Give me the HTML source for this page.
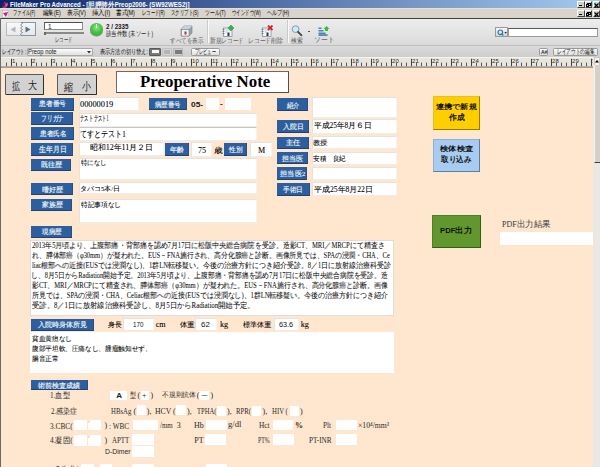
<!DOCTYPE html><html><head><meta charset="utf-8"><style>
*{box-sizing:border-box;margin:0;padding:0}
html,body{width:600px;height:467px;overflow:hidden;background:#FEE6CF}
body{position:relative;font-family:"Liberation Sans",sans-serif;color:#000}
.ab{position:absolute}
.t,.f{position:absolute;white-space:nowrap;line-height:1;transform-origin:0 0}
.lbl{position:absolute;background:#2D5D90;color:#EEF2F6;font-weight:bold;text-align:center;white-space:nowrap;border-bottom:1px solid #1E3F66;border-right:1px solid #244C78}
.fld{position:absolute;background:#fff;border-right:1px solid #E8DCD0;border-bottom:1px solid #E8DCD0}
.wb{position:absolute;background:#fff}
.serif{font-family:"Liberation Serif",serif}
</style></head><body>
<div class="ab" style="left:0;top:0;width:600px;height:8px;background:linear-gradient(to right,#0A246A,#A6CAF0)"></div>
<div class="ab" style="left:0;top:8px;width:600px;height:1px;background:#E4E0D8"></div>
<svg class="ab" style="left:1px;top:0.5px" width="8" height="8"><path d="M1 7 L3 1 L7 2 L5 7 Z" fill="#D0207A"/><path d="M1 7 L3 1 L4 4 Z" fill="#302838"/><path d="M4 4 L7 2 L6 6Z" fill="#F060A8"/></svg>
<div class="ab" style="left:577px;top:1px;width:7.5px;height:7px;background:#D4D0C8;border-top:1px solid #fff;border-left:1px solid #fff;border-right:1px solid #404040;border-bottom:1px solid #404040"></div>
<div class="ab" style="left:584.5px;top:1px;width:7.5px;height:7px;background:#D4D0C8;border-top:1px solid #fff;border-left:1px solid #fff;border-right:1px solid #404040;border-bottom:1px solid #404040"></div>
<div class="ab" style="left:592.5px;top:1px;width:7.5px;height:7px;background:#D4D0C8;border-top:1px solid #fff;border-left:1px solid #fff;border-right:1px solid #404040;border-bottom:1px solid #404040"></div>
<div class="ab" style="left:579px;top:5px;width:3px;height:1px;background:#000"></div>
<div class="ab" style="left:587px;top:2.5px;width:3.5px;height:3px;border:1px solid #000;border-top-width:1.5px"></div>
<div class="ab" style="left:586px;top:3.5px;width:3px;height:3px;border:1px solid #000;background:#D4D0C8"></div>
<svg class="ab" style="left:594px;top:2.5px" width="5" height="5"><path d="M0.5 0.5 L4.5 4.5 M4.5 0.5 L0.5 4.5" stroke="#000" stroke-width="1.2"/></svg>
<div class="ab" style="left:0;top:9px;width:600px;height:8.5px;background:#D8D4CA"></div>
<div class="ab" style="left:0;top:17.5px;width:600px;height:1px;background:#404040"></div>
<svg class="ab" style="left:2px;top:9.5px" width="7" height="8"><rect x="0.5" y="0.5" width="5.5" height="7" fill="#F4F0F4" stroke="#B8B0B8" stroke-width="0.5"/><path d="M1 3 L6 2 L4 7 Z" fill="#C8208A"/></svg>
<div class="ab" style="left:577px;top:10px;width:7.5px;height:6.5px;background:#D4D0C8;border-top:1px solid #fff;border-left:1px solid #fff;border-right:1px solid #404040;border-bottom:1px solid #404040"></div>
<div class="ab" style="left:584.5px;top:10px;width:7.5px;height:6.5px;background:#D4D0C8;border-top:1px solid #fff;border-left:1px solid #fff;border-right:1px solid #404040;border-bottom:1px solid #404040"></div>
<div class="ab" style="left:592.5px;top:10px;width:7.5px;height:6.5px;background:#D4D0C8;border-top:1px solid #fff;border-left:1px solid #fff;border-right:1px solid #404040;border-bottom:1px solid #404040"></div>
<div class="ab" style="left:579px;top:13.5px;width:3px;height:1px;background:#000"></div>
<div class="ab" style="left:587px;top:11.5px;width:3.5px;height:3px;border:1px solid #000;border-top-width:1.5px"></div>
<div class="ab" style="left:586px;top:12.5px;width:3px;height:3px;border:1px solid #000;background:#D4D0C8"></div>
<svg class="ab" style="left:594px;top:11.5px" width="5" height="5"><path d="M0.5 0.5 L4.5 4.5 M4.5 0.5 L0.5 4.5" stroke="#000" stroke-width="1.2"/></svg>
<div class="ab" style="left:0;top:18.5px;width:600px;height:26.5px;background:linear-gradient(#EDEDED,#E4E4E4 50%,#DADADA)"></div>
<div class="ab" style="left:5.5px;top:22px;width:15.5px;height:13.5px;background:linear-gradient(#FAFAFA,#EAEAEA);border:1px solid #B8B8B8;border-right:none;border-top-color:#D8D8D8"></div>
<div class="ab" style="left:21px;top:22px;width:15px;height:13.5px;background:linear-gradient(#F4F6F8,#E4E8EC);border:1px solid #8896A4;border-right-width:1.5px;border-bottom-width:1.5px;border-left:none"></div>
<svg class="ab" style="left:19.5px;top:22px" width="3" height="14"><path d="M1.5 0 L2.5 1.5 L0.5 3 L2.5 4.5 L0.5 6 L2.5 7.5 L0.5 9 L2.5 10.5 L0.5 12 L1.5 13.5" stroke="#505860" stroke-width="0.6" fill="none"/></svg>
<svg class="ab" style="left:10px;top:25.5px" width="6" height="7"><path d="M5.5 0.5 L0.5 3.5 L5.5 6.5Z" fill="#B4B8BC"/></svg>
<svg class="ab" style="left:25px;top:25.5px" width="6" height="7"><path d="M0.5 0.5 L5.5 3.5 L0.5 6.5Z" fill="#5E6E80"/></svg>
<div class="ab" style="left:44.4px;top:22.1px;width:38.2px;height:7.6px;background:#fff;border:1px solid #8A8A8A;border-top:1.5px solid #505050;border-left:1.5px solid #606060"></div>
<div class="ab" style="left:44.5px;top:32.3px;width:39.8px;height:1.5px;background:#8A8A8A"></div>
<div class="ab" style="left:44px;top:31.5px;width:2px;height:3px;background:#6A6A6A"></div>
<div class="ab" style="left:90.2px;top:23.25px;width:12.8px;height:12.25px;border-radius:50%;background:radial-gradient(circle at 50% 35%,#90EA88 0,#4CC04A 45%,#2E9A30 100%);box-shadow:0 0.5px 0.5px #6A8A6A"></div>
<div class="ab" style="left:96.3px;top:24px;width:0.8px;height:4px;background:#E8FFE8"></div>
<div class="ab" style="left:207px;top:20px;width:1px;height:23px;background:#CACACA"></div>
<div class="ab" style="left:208px;top:20px;width:1px;height:23px;background:#FAFAFA"></div>
<div class="ab" style="left:287px;top:20px;width:1px;height:23px;background:#CACACA"></div>
<div class="ab" style="left:288px;top:20px;width:1px;height:23px;background:#FAFAFA"></div>
<svg class="ab" style="left:180px;top:25px" width="13" height="12"><path d="M1 4 L4 1 L12 1 L12 8 L9 11 L1 11Z" fill="#9AA4AE" stroke="#6E7882" stroke-width="0.6"/><rect x="1.5" y="4.5" width="7.5" height="6.5" fill="#F0F2F4" stroke="#7A848E" stroke-width="0.6"/><path d="M4 1 L12 1 L9 4 L1 4Z" fill="#C8D0D8"/><rect x="4.5" y="6.5" width="2" height="3" fill="#A03838"/></svg>
<svg class="ab" style="left:221.5px;top:24.5px" width="13" height="12"><rect x="1.5" y="3" width="8.5" height="8.5" fill="#F4F6F8" stroke="#7A8490" stroke-width="0.7"/><path d="M0.5 4.5h2M0.5 6.5h2M0.5 8.5h2" stroke="#505A64" stroke-width="0.6"/><path d="M3.5 5h5M3.5 7h2" stroke="#9CC4E4" stroke-width="0.8"/><rect x="5.5" y="7.5" width="2" height="3.5" fill="#303848"/><path d="M9 0 L12 3 L9 6 L6 3Z" fill="#40B040" stroke="#208020" stroke-width="0.4"/></svg>
<svg class="ab" style="left:260.5px;top:24.5px" width="13" height="12"><rect x="1.5" y="3" width="8.5" height="8.5" fill="#F4F6F8" stroke="#7A8490" stroke-width="0.7"/><path d="M0.5 4.5h2M0.5 6.5h2M0.5 8.5h2" stroke="#505A64" stroke-width="0.6"/><path d="M3.5 5h5M3.5 7h2" stroke="#9CC4E4" stroke-width="0.8"/><rect x="5.5" y="7.5" width="2" height="3.5" fill="#303848"/><path d="M7 0.5 L11.5 5 M11.5 0.5 L7 5" stroke="#D02828" stroke-width="1.8"/></svg>
<svg class="ab" style="left:291px;top:25px" width="12" height="12"><circle cx="4.6" cy="4.2" r="3.4" fill="#C8ECF8" stroke="#8A9AA4" stroke-width="1"/><path d="M7 6.8 L10.5 10.3" stroke="#404448" stroke-width="1.8" stroke-linecap="round"/></svg>
<div class="ab" style="left:308px;top:30.5px;width:2px;height:1px;background:#505050"></div>
<svg class="ab" style="left:317.5px;top:25.5px" width="13" height="10"><rect x="0.5" y="1.5" width="3" height="1.5" fill="#5080B8"/><rect x="0.5" y="4" width="5" height="1.5" fill="#5080B8"/><rect x="0.5" y="6.5" width="7" height="1.5" fill="#5080B8"/><rect x="0.5" y="8.3" width="9" height="1.5" fill="#4070A8"/><path d="M8.5 0 L11.5 3 L10 3 L10 5 L7 5 L7 3 L5.5 3Z" fill="#30C030"/></svg>
<div class="ab" style="left:495px;top:27px;width:13px;height:10px;background:linear-gradient(#F8F8F8,#D4D4D4);border:1px solid #9A9A9A"></div>
<svg class="ab" style="left:496.5px;top:28.5px" width="11" height="8"><circle cx="3.3" cy="3.3" r="2.3" fill="none" stroke="#2878B0" stroke-width="1.2"/><path d="M4.8 4.8 L6.3 6.5" stroke="#2878B0" stroke-width="1.2"/><path d="M7.3 3 L10 3 L8.65 4.8Z" fill="#303030"/></svg>
<div class="ab" style="left:507.5px;top:27.5px;width:90.5px;height:9.5px;background:#fff;border:1px solid #9A9A9A;border-top:1.5px solid #5A5A5A"></div>
<div class="ab" style="left:0;top:45px;width:600px;height:12.5px;background:linear-gradient(#DADADA,#CDCDCD);border-top:1px solid #BEBEBE"></div>
<div class="ab" style="left:27px;top:47.5px;width:65.5px;height:8px;background:linear-gradient(#FCFCFC,#E0E0E0);border:1px solid #A8A8A8;border-radius:1px"></div>
<svg class="ab" style="left:86.5px;top:50.5px" width="4" height="3"><path d="M0 0 L4 0 L2 2.5Z" fill="#303030"/></svg>
<div class="ab" style="left:149.2px;top:47.5px;width:11.8px;height:8.1px;background:#767676;border:1px solid #5A5A5A;border-radius:1px"></div>
<div class="ab" style="left:151.5px;top:49.5px;width:7.5px;height:4px;background:#FAFAFA;border-bottom:0.8px solid #808080"></div>
<div class="ab" style="left:161.5px;top:47.5px;width:10.4px;height:8.1px;background:#D4D4D4;border:1px solid #C0C0C0"></div>
<div class="ab" style="left:163.5px;top:49.5px;width:6.5px;height:4px;background:#B4B4B4"></div>
<div class="ab" style="left:172.6px;top:47.5px;width:10.6px;height:8.1px;background:#D0D0D0;border:1px solid #B8B8B8"></div>
<div class="ab" style="left:174.5px;top:49.5px;width:7px;height:4px;background:#7A7A7A"></div>
<div class="ab" style="left:190.7px;top:47.5px;width:29.3px;height:8.5px;background:linear-gradient(#FCFCFC,#DEDEDE);border:1px solid #9A9A9A;border-radius:1.5px"></div>
<div class="ab" style="left:538.7px;top:47.5px;width:9.3px;height:8.5px;background:linear-gradient(#FCFCFC,#DEDEDE);border:1px solid #9A9A9A;border-radius:1.5px"></div>
<div class="ab" style="left:553px;top:47.5px;width:44.5px;height:8.5px;background:linear-gradient(#FCFCFC,#DEDEDE);border:1px solid #9A9A9A;border-radius:1.5px"></div>
<svg class="ab" style="left:0;top:57.3px" width="594" height="11"><rect x="0" y="0" width="594" height="9.5" fill="#E8E5DC"/><rect x="0" y="0" width="594" height="1" fill="#F6F4EE"/><rect x="0" y="9.4" width="594" height="1.4" fill="#8A8A8A"/><rect x="6.0" y="5.6" width="1" height="3.6" fill="#585858"/><rect x="11.0" y="1.8" width="1" height="7.4" fill="#404040"/><text x="12.1" y="6.2" font-size="6" font-family="Liberation Sans" fill="#303030">1</text><rect x="16.0" y="5.6" width="1" height="3.6" fill="#585858"/><rect x="21.0" y="5.6" width="1" height="3.6" fill="#585858"/><rect x="26.0" y="5.6" width="1" height="3.6" fill="#585858"/><rect x="31.0" y="1.8" width="1" height="7.4" fill="#404040"/><text x="32.1" y="6.2" font-size="6" font-family="Liberation Sans" fill="#303030">2</text><rect x="36.0" y="5.6" width="1" height="3.6" fill="#585858"/><rect x="41.0" y="5.6" width="1" height="3.6" fill="#585858"/><rect x="46.0" y="5.6" width="1" height="3.6" fill="#585858"/><rect x="51.0" y="1.8" width="1" height="7.4" fill="#404040"/><text x="52.1" y="6.2" font-size="6" font-family="Liberation Sans" fill="#303030">3</text><rect x="56.0" y="5.6" width="1" height="3.6" fill="#585858"/><rect x="61.0" y="5.6" width="1" height="3.6" fill="#585858"/><rect x="66.0" y="5.6" width="1" height="3.6" fill="#585858"/><rect x="71.0" y="1.8" width="1" height="7.4" fill="#404040"/><text x="72.1" y="6.2" font-size="6" font-family="Liberation Sans" fill="#303030">4</text><rect x="76.0" y="5.6" width="1" height="3.6" fill="#585858"/><rect x="81.0" y="5.6" width="1" height="3.6" fill="#585858"/><rect x="86.0" y="5.6" width="1" height="3.6" fill="#585858"/><rect x="91.0" y="1.8" width="1" height="7.4" fill="#404040"/><text x="92.1" y="6.2" font-size="6" font-family="Liberation Sans" fill="#303030">5</text><rect x="96.0" y="5.6" width="1" height="3.6" fill="#585858"/><rect x="101.0" y="5.6" width="1" height="3.6" fill="#585858"/><rect x="106.0" y="5.6" width="1" height="3.6" fill="#585858"/><rect x="111.0" y="1.8" width="1" height="7.4" fill="#404040"/><text x="112.1" y="6.2" font-size="6" font-family="Liberation Sans" fill="#303030">6</text><rect x="116.0" y="5.6" width="1" height="3.6" fill="#585858"/><rect x="121.0" y="5.6" width="1" height="3.6" fill="#585858"/><rect x="126.0" y="5.6" width="1" height="3.6" fill="#585858"/><rect x="131.0" y="1.8" width="1" height="7.4" fill="#404040"/><text x="132.1" y="6.2" font-size="6" font-family="Liberation Sans" fill="#303030">7</text><rect x="136.0" y="5.6" width="1" height="3.6" fill="#585858"/><rect x="141.0" y="5.6" width="1" height="3.6" fill="#585858"/><rect x="146.0" y="5.6" width="1" height="3.6" fill="#585858"/><rect x="151.0" y="1.8" width="1" height="7.4" fill="#404040"/><text x="152.1" y="6.2" font-size="6" font-family="Liberation Sans" fill="#303030">8</text><rect x="156.0" y="5.6" width="1" height="3.6" fill="#585858"/><rect x="161.0" y="5.6" width="1" height="3.6" fill="#585858"/><rect x="166.0" y="5.6" width="1" height="3.6" fill="#585858"/><rect x="171.0" y="1.8" width="1" height="7.4" fill="#404040"/><text x="172.1" y="6.2" font-size="6" font-family="Liberation Sans" fill="#303030">9</text><rect x="176.0" y="5.6" width="1" height="3.6" fill="#585858"/><rect x="181.0" y="5.6" width="1" height="3.6" fill="#585858"/><rect x="186.0" y="5.6" width="1" height="3.6" fill="#585858"/><rect x="191.0" y="1.8" width="1" height="7.4" fill="#404040"/><text x="192.1" y="6.2" font-size="6" font-family="Liberation Sans" fill="#303030">10</text><rect x="196.0" y="5.6" width="1" height="3.6" fill="#585858"/><rect x="201.0" y="5.6" width="1" height="3.6" fill="#585858"/><rect x="206.0" y="5.6" width="1" height="3.6" fill="#585858"/><rect x="211.0" y="1.8" width="1" height="7.4" fill="#404040"/><text x="212.1" y="6.2" font-size="6" font-family="Liberation Sans" fill="#303030">11</text><rect x="216.0" y="5.6" width="1" height="3.6" fill="#585858"/><rect x="221.0" y="5.6" width="1" height="3.6" fill="#585858"/><rect x="226.0" y="5.6" width="1" height="3.6" fill="#585858"/><rect x="231.0" y="1.8" width="1" height="7.4" fill="#404040"/><text x="232.1" y="6.2" font-size="6" font-family="Liberation Sans" fill="#303030">12</text><rect x="236.0" y="5.6" width="1" height="3.6" fill="#585858"/><rect x="241.0" y="5.6" width="1" height="3.6" fill="#585858"/><rect x="246.0" y="5.6" width="1" height="3.6" fill="#585858"/><rect x="251.0" y="1.8" width="1" height="7.4" fill="#404040"/><text x="252.1" y="6.2" font-size="6" font-family="Liberation Sans" fill="#303030">13</text><rect x="256.0" y="5.6" width="1" height="3.6" fill="#585858"/><rect x="261.0" y="5.6" width="1" height="3.6" fill="#585858"/><rect x="266.0" y="5.6" width="1" height="3.6" fill="#585858"/><rect x="271.0" y="1.8" width="1" height="7.4" fill="#404040"/><text x="272.1" y="6.2" font-size="6" font-family="Liberation Sans" fill="#303030">14</text><rect x="276.0" y="5.6" width="1" height="3.6" fill="#585858"/><rect x="281.0" y="5.6" width="1" height="3.6" fill="#585858"/><rect x="286.0" y="5.6" width="1" height="3.6" fill="#585858"/><rect x="291.0" y="1.8" width="1" height="7.4" fill="#404040"/><text x="292.1" y="6.2" font-size="6" font-family="Liberation Sans" fill="#303030">15</text><rect x="296.0" y="5.6" width="1" height="3.6" fill="#585858"/><rect x="301.0" y="5.6" width="1" height="3.6" fill="#585858"/><rect x="306.0" y="5.6" width="1" height="3.6" fill="#585858"/><rect x="311.0" y="1.8" width="1" height="7.4" fill="#404040"/><text x="312.1" y="6.2" font-size="6" font-family="Liberation Sans" fill="#303030">16</text><rect x="316.0" y="5.6" width="1" height="3.6" fill="#585858"/><rect x="321.0" y="5.6" width="1" height="3.6" fill="#585858"/><rect x="326.0" y="5.6" width="1" height="3.6" fill="#585858"/><rect x="331.0" y="1.8" width="1" height="7.4" fill="#404040"/><text x="332.1" y="6.2" font-size="6" font-family="Liberation Sans" fill="#303030">17</text><rect x="336.0" y="5.6" width="1" height="3.6" fill="#585858"/><rect x="341.0" y="5.6" width="1" height="3.6" fill="#585858"/><rect x="346.0" y="5.6" width="1" height="3.6" fill="#585858"/><rect x="351.0" y="1.8" width="1" height="7.4" fill="#404040"/><text x="352.1" y="6.2" font-size="6" font-family="Liberation Sans" fill="#303030">18</text><rect x="356.0" y="5.6" width="1" height="3.6" fill="#585858"/><rect x="361.0" y="5.6" width="1" height="3.6" fill="#585858"/><rect x="366.0" y="5.6" width="1" height="3.6" fill="#585858"/><rect x="371.0" y="1.8" width="1" height="7.4" fill="#404040"/><text x="372.1" y="6.2" font-size="6" font-family="Liberation Sans" fill="#303030">19</text><rect x="376.0" y="5.6" width="1" height="3.6" fill="#585858"/><rect x="381.0" y="5.6" width="1" height="3.6" fill="#585858"/><rect x="386.0" y="5.6" width="1" height="3.6" fill="#585858"/><rect x="391.0" y="1.8" width="1" height="7.4" fill="#404040"/><text x="392.1" y="6.2" font-size="6" font-family="Liberation Sans" fill="#303030">20</text><rect x="396.0" y="5.6" width="1" height="3.6" fill="#585858"/><rect x="401.0" y="5.6" width="1" height="3.6" fill="#585858"/><rect x="406.0" y="5.6" width="1" height="3.6" fill="#585858"/><rect x="411.0" y="1.8" width="1" height="7.4" fill="#404040"/><text x="412.1" y="6.2" font-size="6" font-family="Liberation Sans" fill="#303030">21</text><rect x="416.0" y="5.6" width="1" height="3.6" fill="#585858"/><rect x="421.0" y="5.6" width="1" height="3.6" fill="#585858"/><rect x="426.0" y="5.6" width="1" height="3.6" fill="#585858"/><rect x="431.0" y="1.8" width="1" height="7.4" fill="#404040"/><text x="432.1" y="6.2" font-size="6" font-family="Liberation Sans" fill="#303030">22</text><rect x="436.0" y="5.6" width="1" height="3.6" fill="#585858"/><rect x="441.0" y="5.6" width="1" height="3.6" fill="#585858"/><rect x="446.0" y="5.6" width="1" height="3.6" fill="#585858"/><rect x="451.0" y="1.8" width="1" height="7.4" fill="#404040"/><text x="452.1" y="6.2" font-size="6" font-family="Liberation Sans" fill="#303030">23</text><rect x="456.0" y="5.6" width="1" height="3.6" fill="#585858"/><rect x="461.0" y="5.6" width="1" height="3.6" fill="#585858"/><rect x="466.0" y="5.6" width="1" height="3.6" fill="#585858"/><rect x="471.0" y="1.8" width="1" height="7.4" fill="#404040"/><text x="472.1" y="6.2" font-size="6" font-family="Liberation Sans" fill="#303030">24</text><rect x="476.0" y="5.6" width="1" height="3.6" fill="#585858"/><rect x="481.0" y="5.6" width="1" height="3.6" fill="#585858"/><rect x="486.0" y="5.6" width="1" height="3.6" fill="#585858"/><rect x="491.0" y="1.8" width="1" height="7.4" fill="#404040"/><text x="492.1" y="6.2" font-size="6" font-family="Liberation Sans" fill="#303030">25</text><rect x="496.0" y="5.6" width="1" height="3.6" fill="#585858"/><rect x="501.0" y="5.6" width="1" height="3.6" fill="#585858"/><rect x="506.0" y="5.6" width="1" height="3.6" fill="#585858"/><rect x="511.0" y="1.8" width="1" height="7.4" fill="#404040"/><text x="512.1" y="6.2" font-size="6" font-family="Liberation Sans" fill="#303030">26</text><rect x="516.0" y="5.6" width="1" height="3.6" fill="#585858"/><rect x="521.0" y="5.6" width="1" height="3.6" fill="#585858"/><rect x="526.0" y="5.6" width="1" height="3.6" fill="#585858"/><rect x="531.0" y="1.8" width="1" height="7.4" fill="#404040"/><text x="532.1" y="6.2" font-size="6" font-family="Liberation Sans" fill="#303030">27</text><rect x="536.0" y="5.6" width="1" height="3.6" fill="#585858"/><rect x="541.0" y="5.6" width="1" height="3.6" fill="#585858"/><rect x="546.0" y="5.6" width="1" height="3.6" fill="#585858"/><rect x="551.0" y="1.8" width="1" height="7.4" fill="#404040"/><text x="552.1" y="6.2" font-size="6" font-family="Liberation Sans" fill="#303030">28</text><rect x="556.0" y="5.6" width="1" height="3.6" fill="#585858"/><rect x="561.0" y="5.6" width="1" height="3.6" fill="#585858"/><rect x="566.0" y="5.6" width="1" height="3.6" fill="#585858"/><rect x="571.0" y="1.8" width="1" height="7.4" fill="#404040"/><text x="572.1" y="6.2" font-size="6" font-family="Liberation Sans" fill="#303030">29</text><rect x="576.0" y="5.6" width="1" height="3.6" fill="#585858"/><rect x="581.0" y="5.6" width="1" height="3.6" fill="#585858"/><rect x="586.0" y="5.6" width="1" height="3.6" fill="#585858"/><rect x="591.0" y="1.8" width="1" height="7.4" fill="#404040"/><text x="592.1" y="6.2" font-size="6" font-family="Liberation Sans" fill="#303030">30</text></svg>
<div class="ab" style="left:0;top:18px;width:1px;height:449px;background:#6A6A6A"></div>
<div class="ab" style="left:593.2px;top:57.3px;width:6.8px;height:410px;background:#E9E8E4"></div>
<div class="ab" style="left:593.5px;top:57.3px;width:6.5px;height:8.5px;background:#F2F2F0;border:0.5px solid #C8C8C8"></div>
<svg class="ab" style="left:595px;top:59.5px" width="4" height="3"><path d="M0 2.5 L4 2.5 L2 0Z" fill="#000"/></svg>
<div class="ab" style="left:593.5px;top:64.5px;width:6.5px;height:98px;background:#D4D0C8;border-left:1px solid #F4F4F2;border-bottom:1px solid #404040"></div>
<div class="ab" style="left:5px;top:73.6px;width:39px;height:21.4px;background:#D2D2D2;border:1px solid #5A5A5A;border-right:1.5px solid #303030;border-bottom:1.5px solid #303030;border-radius:1.5px"></div>
<div class="ab" style="left:57.4px;top:73.6px;width:40.0px;height:21.4px;background:#D2D2D2;border:1px solid #5A5A5A;border-right:1.5px solid #303030;border-bottom:1.5px solid #303030;border-radius:1.5px"></div>
<div class="ab" style="left:116px;top:71px;width:173.3px;height:22.3px;background:#fff;border:1px solid #6A6A6A;border-right:1.5px solid #505050;border-bottom:1.5px solid #505050"></div>
<div class="ab" style="left:31.3px;top:97.5px;width:42.9px;height:13.0px;background:#2D5F9F;border-bottom:1px solid #1E4274;border-right:1px solid #24508A"></div>
<div class="ab" style="left:31.3px;top:112.2px;width:41.5px;height:12.4px;background:#2D5F9F;border-bottom:1px solid #1E4274;border-right:1px solid #24508A"></div>
<div class="ab" style="left:31.3px;top:127.1px;width:42.8px;height:12.9px;background:#2D5F9F;border-bottom:1px solid #1E4274;border-right:1px solid #24508A"></div>
<div class="ab" style="left:31.3px;top:142.7px;width:41.7px;height:13.2px;background:#2D5F9F;border-bottom:1px solid #1E4274;border-right:1px solid #24508A"></div>
<div class="ab" style="left:31.3px;top:159px;width:40.0px;height:12.1px;background:#2D5F9F;border-bottom:1px solid #1E4274;border-right:1px solid #24508A"></div>
<div class="ab" style="left:31.2px;top:183.2px;width:41.8px;height:11.6px;background:#2D5F9F;border-bottom:1px solid #1E4274;border-right:1px solid #24508A"></div>
<div class="ab" style="left:31.2px;top:199.3px;width:40.5px;height:11.5px;background:#2D5F9F;border-bottom:1px solid #1E4274;border-right:1px solid #24508A"></div>
<div class="ab" style="left:31.2px;top:226.3px;width:40.5px;height:11.5px;background:#2D5F9F;border-bottom:1px solid #1E4274;border-right:1px solid #24508A"></div>
<div class="ab" style="left:30.6px;top:319.3px;width:63.3px;height:11.3px;background:#2D5F9F;border-bottom:1px solid #1E4274;border-right:1px solid #24508A"></div>
<div class="ab" style="left:31px;top:379.6px;width:56.75px;height:10.9px;background:#2D5F9F;border-bottom:1px solid #1E4274;border-right:1px solid #24508A"></div>
<div class="ab" style="left:78.8px;top:97px;width:60.4px;height:14px;background:#fff;border:1px solid #E6E2DE;border-right-color:#F6F2EE;border-bottom-color:#F2ECE6;"></div>
<div class="ab" style="left:78.8px;top:113px;width:178.0px;height:13.5px;background:#fff;border:1px solid #E6E2DE;border-right-color:#F6F2EE;border-bottom-color:#F2ECE6;"></div>
<div class="ab" style="left:78.8px;top:126.5px;width:178.0px;height:14.25px;background:#fff;border:1px solid #E6E2DE;border-right-color:#F6F2EE;border-bottom-color:#F2ECE6;border-top-color:#C8C8C8"></div>
<div class="ab" style="left:78.8px;top:142.25px;width:84.95px;height:13.5px;background:#fff;border:1px solid #E6E2DE;border-right-color:#F6F2EE;border-bottom-color:#F2ECE6;"></div>
<div class="ab" style="left:165.4px;top:142.75px;width:23.2px;height:12.75px;background:#2D5F9F;border-bottom:1px solid #1E4274;border-right:1px solid #24508A"></div>
<div class="ab" style="left:190.5px;top:141.8px;width:21.85px;height:15.2px;background:#fff;border:1px solid #E6E2DE;border-right-color:#F6F2EE;border-bottom-color:#F2ECE6;"></div>
<div class="ab" style="left:224.3px;top:142.75px;width:22.8px;height:12.75px;background:#2D5F9F;border-bottom:1px solid #1E4274;border-right:1px solid #24508A"></div>
<div class="ab" style="left:249.8px;top:141.8px;width:22.0px;height:15.2px;background:#fff;border:1px solid #E6E2DE;border-right-color:#F6F2EE;border-bottom-color:#F2ECE6;"></div>
<div class="ab" style="left:78.8px;top:158px;width:178.3px;height:22.4px;background:#fff;border:1px solid #E6E2DE;border-right-color:#F6F2EE;border-bottom-color:#F2ECE6;"></div>
<div class="ab" style="left:78.8px;top:182.3px;width:178.3px;height:12.2px;background:#fff;border:1px solid #E6E2DE;border-right-color:#F6F2EE;border-bottom-color:#F2ECE6;"></div>
<div class="ab" style="left:78.8px;top:198.5px;width:178.3px;height:24.0px;background:#fff;border:1px solid #E6E2DE;border-right-color:#F6F2EE;border-bottom-color:#F2ECE6;"></div>
<div class="ab" style="left:148.9px;top:98.2px;width:37.7px;height:12.3px;background:#2D5F9F;border-bottom:1px solid #1E4274;border-right:1px solid #24508A"></div>
<div class="ab" style="left:205.6px;top:97.6px;width:13.4px;height:12.4px;background:#fff"></div>
<div class="ab" style="left:225px;top:97.6px;width:25.6px;height:12.4px;background:#fff"></div>
<div class="ab" style="left:277.4px;top:97.7px;width:30.5px;height:13.4px;background:#2D5F9F;border-bottom:1px solid #1E4274;border-right:1px solid #24508A"></div>
<div class="ab" style="left:312.1px;top:97.1px;width:85.1px;height:20.7px;background:#fff;border:1px solid #E6E2DE;border-right-color:#F6F2EE;border-bottom-color:#F2ECE6;"></div>
<div class="ab" style="left:277.4px;top:120.2px;width:31.6px;height:12.8px;background:#2D5F9F;border-bottom:1px solid #1E4274;border-right:1px solid #24508A"></div>
<div class="ab" style="left:312.1px;top:119.2px;width:85.1px;height:14.9px;background:#fff;border:1px solid #E6E2DE;border-right-color:#F6F2EE;border-bottom-color:#F2ECE6;"></div>
<div class="ab" style="left:277.3px;top:136.8px;width:31.3px;height:12.2px;background:#2D5F9F;border-bottom:1px solid #1E4274;border-right:1px solid #24508A"></div>
<div class="ab" style="left:312.1px;top:136.2px;width:85.1px;height:13.1px;background:#fff;border:1px solid #E6E2DE;border-right-color:#F6F2EE;border-bottom-color:#F2ECE6;"></div>
<div class="ab" style="left:277.3px;top:152.1px;width:30.7px;height:12.4px;background:#2D5F9F;border-bottom:1px solid #1E4274;border-right:1px solid #24508A"></div>
<div class="ab" style="left:312.1px;top:152px;width:85.1px;height:12.9px;background:#fff;border:1px solid #E6E2DE;border-right-color:#F6F2EE;border-bottom-color:#F2ECE6;"></div>
<div class="ab" style="left:277.3px;top:167.4px;width:30.1px;height:12.4px;background:#2D5F9F;border-bottom:1px solid #1E4274;border-right:1px solid #24508A"></div>
<div class="ab" style="left:312.1px;top:166.7px;width:85.1px;height:13.6px;background:#fff;border:1px solid #E6E2DE;border-right-color:#F6F2EE;border-bottom-color:#F2ECE6;"></div>
<div class="ab" style="left:277.3px;top:182.7px;width:32.4px;height:13.0px;background:#2D5F9F;border-bottom:1px solid #1E4274;border-right:1px solid #24508A"></div>
<div class="ab" style="left:312.1px;top:181.9px;width:85.1px;height:14.1px;background:#fff;border:1px solid #E6E2DE;border-right-color:#F6F2EE;border-bottom-color:#F2ECE6;"></div>
<div class="ab" style="left:433.2px;top:96.2px;width:46.6px;height:33.8px;background:#FFCE00;border:1px solid #E8C020;border-right:1.5px solid #9A7C00;border-bottom:1.5px solid #9A7C00"></div>
<div class="ab" style="left:433.3px;top:138.5px;width:46.7px;height:33.8px;background:#A8CBF2;border:1px solid #90B0D8;border-right:1.5px solid #5A7EA6;border-bottom:1.5px solid #5A7EA6"></div>
<div class="ab" style="left:432.2px;top:214.6px;width:48.7px;height:33.7px;background:#62972F;border:1px solid #4C8226;border-right:1.5px solid #2C6410;border-bottom:1.5px solid #2C6410"></div>
<div class="ab" style="left:500.4px;top:231.9px;width:92.8px;height:13.0px;background:#fff"></div>
<div class="ab" style="left:30.3px;top:240px;width:364.1px;height:75.8px;background:#fff;border:1px solid #E0DCD8"></div>
<div class="ab" style="left:123.3px;top:318.2px;width:30.4px;height:13.3px;background:#fff;border:1px solid #E6E2DE;border-right-color:#F6F2EE;border-bottom-color:#F2ECE6;"></div>
<div class="ab" style="left:195.3px;top:318.2px;width:21.4px;height:13.3px;background:#fff;border:1px solid #E6E2DE;border-right-color:#F6F2EE;border-bottom-color:#F2ECE6;"></div>
<div class="ab" style="left:274px;top:318.2px;width:25.3px;height:12.8px;background:#fff;border:1px solid #E6E2DE;border-right-color:#F6F2EE;border-bottom-color:#F2ECE6;"></div>
<div class="ab" style="left:30.3px;top:331.7px;width:364.0px;height:41.3px;background:#fff"></div>
<div class="ab" style="left:110.1px;top:390.6px;width:16.5px;height:9.7px;background:#fff"></div>
<div class="ab" style="left:140.75px;top:390.6px;width:8.25px;height:9.7px;background:#fff"></div>
<div class="ab" style="left:199.4px;top:390.6px;width:10.1px;height:9.7px;background:#fff"></div>
<div class="ab" style="left:137.1px;top:405.25px;width:8.6px;height:10.05px;background:#fff"></div>
<div class="ab" style="left:175.6px;top:405.25px;width:10.1px;height:10.05px;background:#fff"></div>
<div class="ab" style="left:217px;top:405.5px;width:9.2px;height:10.6px;background:#fff"></div>
<div class="ab" style="left:251.8px;top:405.5px;width:9.2px;height:10.6px;background:#fff"></div>
<div class="ab" style="left:290.3px;top:405.5px;width:8.8px;height:10.6px;background:#fff"></div>
<div class="ab" style="left:73.5px;top:419.8px;width:13.5px;height:10.5px;background:#fff"></div>
<div class="ab" style="left:88.2px;top:419.8px;width:13.3px;height:10.5px;background:#fff"></div>
<div class="ab" style="left:132.5px;top:419.8px;width:25.7px;height:10.5px;background:#fff"></div>
<div class="ab" style="left:205.5px;top:419.8px;width:21.0px;height:10.1px;background:#fff"></div>
<div class="ab" style="left:273.2px;top:419.8px;width:20.3px;height:10.1px;background:#fff"></div>
<div class="ab" style="left:335.6px;top:420px;width:21.4px;height:10px;background:#fff"></div>
<div class="ab" style="left:73.5px;top:435px;width:13.5px;height:10.5px;background:#fff"></div>
<div class="ab" style="left:88.2px;top:435px;width:13.3px;height:10.5px;background:#fff"></div>
<div class="ab" style="left:131.8px;top:433.8px;width:22.4px;height:11.7px;background:#fff"></div>
<div class="ab" style="left:204.8px;top:433.8px;width:21.7px;height:11.0px;background:#fff"></div>
<div class="ab" style="left:272.5px;top:433.8px;width:21.7px;height:11.0px;background:#fff"></div>
<div class="ab" style="left:335.6px;top:434.4px;width:21.4px;height:10.6px;background:#fff"></div>
<div class="ab" style="left:131.8px;top:446.2px;width:22.4px;height:11.0px;background:#fff"></div>
<div class="ab" style="left:80.8px;top:464.3px;width:13.3px;height:10.7px;background:#fff"></div>
<div class="ab" style="left:99.5px;top:464.3px;width:12.5px;height:10.7px;background:#fff"></div>
<div class="ab" style="left:131.8px;top:464.3px;width:22.4px;height:10.7px;background:#fff"></div>
<div class="ab" style="left:205.5px;top:464.3px;width:21.0px;height:10.7px;background:#fff"></div>
<div class="f" style="left:9.70px;top:1.80px;font-size:6.5px;transform:scaleX(0.941);font-weight:bold;color:#fff">FileMaker Pro Advanced - [胆膵肺外Preop2006- (SW92WES2)]</div>
<div class="f" style="left:12.70px;top:9.80px;font-size:6.5px;transform:scaleX(0.611);color:#000">ファイル(F)</div>
<div class="f" style="left:43.00px;top:9.80px;font-size:6.5px;transform:scaleX(0.783);color:#000">編集(E)</div>
<div class="f" style="left:67.00px;top:10.30px;font-size:6.5px;transform:scaleX(0.826);color:#000">表示(V)</div>
<div class="f" style="left:92.00px;top:9.80px;font-size:6.5px;transform:scaleX(0.900);color:#000">挿入(I)</div>
<div class="f" style="left:116.00px;top:10.30px;font-size:6.5px;transform:scaleX(0.792);color:#000">書式(M)</div>
<div class="f" style="left:142.39px;top:9.80px;font-size:6.5px;transform:scaleX(0.611);color:#000">レコード(R)</div>
<div class="f" style="left:171.37px;top:9.80px;font-size:6.5px;transform:scaleX(0.628);color:#000">スクリプト(S)</div>
<div class="f" style="left:205.00px;top:9.80px;font-size:6.5px;transform:scaleX(0.700);color:#000">ツール(T)</div>
<div class="f" style="left:232.00px;top:9.80px;font-size:6.5px;transform:scaleX(0.630);color:#000">ウインドウ(W)</div>
<div class="f" style="left:267.00px;top:9.80px;font-size:6.5px;transform:scaleX(0.733);color:#000">ヘルプ(H)</div>
<div class="f" style="left:48.00px;top:23.50px;font-size:6.5px;transform:scaleX(1.000);color:#202040">1</div>
<div class="f" style="left:55.12px;top:37.00px;font-size:6.5px;transform:scaleX(0.629);color:#303030">レコード</div>
<div class="f" style="left:106.00px;top:23.50px;font-size:6.5px;transform:scaleX(0.958);color:#181818;font-weight:bold">2 / 2335</div>
<div class="f" style="left:106.00px;top:30.50px;font-size:6.5px;transform:scaleX(0.758);color:#181818">該当件数 (未ソート)</div>
<div class="f" style="left:170.00px;top:37.50px;font-size:6.5px;transform:scaleX(0.786);color:#606060">すべてを表示</div>
<div class="f" style="left:210.00px;top:37.50px;font-size:6.5px;transform:scaleX(0.805);color:#606060">新規レコード</div>
<div class="f" style="left:248.17px;top:37.50px;font-size:6.5px;transform:scaleX(0.829);color:#606060">レコード削除</div>
<div class="f" style="left:291.00px;top:37.50px;font-size:6.5px;transform:scaleX(0.821);color:#606060">検索</div>
<div class="f" style="left:314.03px;top:37.00px;font-size:6.5px;transform:scaleX(0.972);color:#606060">ソート</div>
<div class="f" style="left:2.34px;top:48.50px;font-size:6.5px;transform:scaleX(0.658);color:#101010">レイアウト:</div>
<div class="f" style="left:28.00px;top:48.50px;font-size:6.5px;transform:scaleX(0.897);color:#101010">Preop note</div>
<div class="f" style="left:100.00px;top:49.00px;font-size:6.5px;transform:scaleX(0.738);color:#101010">表示方法の切り替え:</div>
<div class="f" style="left:195.00px;top:48.80px;font-size:6.5px;transform:scaleX(0.594);color:#101010">プレビュー</div>
<div class="f" style="left:541.00px;top:50.00px;font-size:5px;transform:scaleX(1.000);font-weight:bold;color:#303030">A#</div>
<div class="f" style="left:556.84px;top:49.00px;font-size:6.5px;transform:scaleX(0.664);color:#101010">レイアウトの編集</div>
<div class="f" style="left:12.00px;top:81.00px;font-size:11px;transform:scaleX(0.727);font-family:'Liberation Serif',serif;color:#202020">拡</div>
<div class="f" style="left:28.00px;top:80.00px;font-size:11px;transform:scaleX(0.818);font-family:'Liberation Serif',serif;color:#202020">大</div>
<div class="f" style="left:64.00px;top:81.50px;font-size:11px;transform:scaleX(0.818);font-family:'Liberation Serif',serif;color:#202020">縮</div>
<div class="f" style="left:82.00px;top:81.00px;font-size:11px;transform:scaleX(0.818);font-family:'Liberation Serif',serif;color:#202020">小</div>
<div class="f" style="left:140.00px;top:72.50px;font-size:17.5px;transform:scaleX(0.963);font-family:'Liberation Serif',serif;font-weight:bold;color:#000">Preoperative Note</div>
<div class="f" style="left:39.47px;top:101.25px;font-size:7.0px;transform:scaleX(0.966);font-family:'Liberation Serif',serif;color:#DDE5EE;font-weight:bold">患者番号</div>
<div class="f" style="left:40.50px;top:115.25px;font-size:7.5px;transform:scaleX(0.719);font-family:'Liberation Serif',serif;color:#DDE5EE;font-weight:bold">フリガナ</div>
<div class="f" style="left:39.84px;top:131.10px;font-size:7.0px;transform:scaleX(0.943);font-family:'Liberation Serif',serif;color:#DDE5EE;font-weight:bold">患者氏名</div>
<div class="f" style="left:38.86px;top:145.60px;font-size:7.5px;transform:scaleX(0.859);font-family:'Liberation Serif',serif;color:#DDE5EE;font-weight:bold">生年月日</div>
<div class="f" style="left:40.90px;top:162.45px;font-size:7.0px;transform:scaleX(1.005);font-family:'Liberation Serif',serif;color:#DDE5EE;font-weight:bold">既往歴</div>
<div class="f" style="left:41.50px;top:186.60px;font-size:7.0px;transform:scaleX(1.010);font-family:'Liberation Serif',serif;color:#DDE5EE;font-weight:bold">嗜好歴</div>
<div class="f" style="left:41.50px;top:202.25px;font-size:7.0px;transform:scaleX(0.976);font-family:'Liberation Serif',serif;color:#DDE5EE;font-weight:bold">家族歴</div>
<div class="f" style="left:42.43px;top:229.20px;font-size:7.0px;transform:scaleX(0.932);font-family:'Liberation Serif',serif;color:#DDE5EE;font-weight:bold">現病歴</div>
<div class="f" style="left:37.90px;top:322.25px;font-size:7.0px;transform:scaleX(1.000);font-family:'Liberation Serif',serif;color:#DDE5EE;font-weight:bold">入院時身体所見</div>
<div class="f" style="left:38.00px;top:382.50px;font-size:7.0px;transform:scaleX(1.000);font-family:'Liberation Serif',serif;color:#DDE5EE;font-weight:bold">術前検査成績</div>
<div class="f" style="left:80.00px;top:100.35px;font-size:9px;transform:scaleX(0.922);font-family:'Liberation Serif',serif;color:#000;text-shadow:0.25px 0 0 rgba(0,0,0,0.3)">00000019</div>
<div class="f" style="left:80.00px;top:115.15px;font-size:7.5px;transform:scaleX(0.532);font-family:'Liberation Serif',serif;color:#000;text-shadow:0.25px 0 0 rgba(0,0,0,0.3)">テスト テスト1</div>
<div class="f" style="left:80.20px;top:129.72px;font-size:9.0px;transform:scaleX(0.781);font-family:'Liberation Serif',serif;color:#000;text-shadow:0.25px 0 0 rgba(0,0,0,0.3)">てすとテスト1</div>
<div class="f" style="left:90.25px;top:144.22px;font-size:8.0px;transform:scaleX(0.988);font-family:'Liberation Serif',serif;color:#000;text-shadow:0.25px 0 0 rgba(0,0,0,0.3)">昭和12年11月２日</div>
<div class="f" style="left:169.60px;top:146.88px;font-size:7.0px;transform:scaleX(1.018);font-family:'Liberation Serif',serif;color:#DDE5EE;font-weight:bold">年齢</div>
<div class="f" style="left:198.10px;top:147.15px;font-size:8px;transform:scaleX(1.000);font-family:'Liberation Serif',serif;color:#000;text-shadow:0.25px 0 0 rgba(0,0,0,0.3)">75</div>
<div class="f" style="left:213.70px;top:146.82px;font-size:8px;transform:scaleX(1.088);font-family:'Liberation Serif',serif;color:#000;text-shadow:0.25px 0 0 rgba(0,0,0,0.3)">歳</div>
<div class="f" style="left:229.45px;top:146.88px;font-size:7.0px;transform:scaleX(0.950);font-family:'Liberation Serif',serif;color:#DDE5EE;font-weight:bold">性別</div>
<div class="f" style="left:258.00px;top:147.15px;font-size:8px;transform:scaleX(1.000);font-family:'Liberation Serif',serif;color:#000;text-shadow:0.25px 0 0 rgba(0,0,0,0.3)">M</div>
<div class="f" style="left:80.50px;top:160.05px;font-size:6.5px;transform:scaleX(0.904);font-family:'Liberation Serif',serif;color:#000;text-shadow:0.25px 0 0 rgba(0,0,0,0.3)">特になし</div>
<div class="f" style="left:79.50px;top:186.12px;font-size:6.5px;transform:scaleX(0.997);font-family:'Liberation Serif',serif;color:#000;text-shadow:0.25px 0 0 rgba(0,0,0,0.3)">タバコ5本/日</div>
<div class="f" style="left:80.50px;top:202.00px;font-size:6.5px;transform:scaleX(0.956);font-family:'Liberation Serif',serif;color:#000;text-shadow:0.25px 0 0 rgba(0,0,0,0.3)">特記事項なし</div>
<div class="f" style="left:155.00px;top:101.75px;font-size:7.0px;transform:scaleX(0.911);font-family:'Liberation Serif',serif;color:#DDE5EE;font-weight:bold">病歴番号</div>
<div class="f" style="left:190.60px;top:100.50px;font-size:8px;transform:scaleX(1.050);font-family:'Liberation Sans',sans-serif;font-weight:bold;color:#202020">05-</div>
<div class="f" style="left:220.00px;top:99.70px;font-size:8px;transform:scaleX(1.000);font-family:'Liberation Sans',sans-serif;font-weight:bold;color:#202020">-</div>
<div class="f" style="left:286.79px;top:102.70px;font-size:7.0px;transform:scaleX(0.893);font-family:'Liberation Serif',serif;color:#DDE5EE;font-weight:bold">紹介</div>
<div class="f" style="left:282.70px;top:124.35px;font-size:7.0px;transform:scaleX(0.971);font-family:'Liberation Serif',serif;color:#DDE5EE;font-weight:bold">入院日</div>
<div class="f" style="left:314.00px;top:121.85px;font-size:7.5px;transform:scaleX(0.971);font-family:'Liberation Serif',serif;color:#000;text-shadow:0.25px 0 0 rgba(0,0,0,0.3)">平成25年8月６日</div>
<div class="f" style="left:285.50px;top:140.40px;font-size:7.0px;transform:scaleX(1.036);font-family:'Liberation Serif',serif;color:#DDE5EE;font-weight:bold">主任</div>
<div class="f" style="left:313.30px;top:140.15px;font-size:7.0px;transform:scaleX(1.000);font-family:'Liberation Serif',serif;color:#000;text-shadow:0.25px 0 0 rgba(0,0,0,0.3)">教授</div>
<div class="f" style="left:282.00px;top:155.85px;font-size:7.0px;transform:scaleX(1.010);font-family:'Liberation Serif',serif;color:#DDE5EE;font-weight:bold">担当医</div>
<div class="f" style="left:313.30px;top:155.50px;font-size:7.0px;transform:scaleX(0.934);font-family:'Liberation Serif',serif;color:#000;text-shadow:0.25px 0 0 rgba(0,0,0,0.3)">安積　良紀</div>
<div class="f" style="left:279.70px;top:171.15px;font-size:7.0px;transform:scaleX(1.036);font-family:'Liberation Serif',serif;color:#DDE5EE;font-weight:bold">担当医2</div>
<div class="f" style="left:283.20px;top:186.65px;font-size:7.0px;transform:scaleX(0.952);font-family:'Liberation Serif',serif;color:#DDE5EE;font-weight:bold">手術日</div>
<div class="f" style="left:314.00px;top:185.85px;font-size:7.5px;transform:scaleX(1.000);font-family:'Liberation Serif',serif;color:#000;text-shadow:0.25px 0 0 rgba(0,0,0,0.3)">平成25年8月22日</div>
<div class="f" style="left:436.20px;top:103.00px;font-size:7.0px;transform:scaleX(1.166);font-family:'Liberation Sans',sans-serif;color:#101010;font-weight:bold">連携で新規</div>
<div class="f" style="left:449.47px;top:114.25px;font-size:8.0px;transform:scaleX(0.971);font-family:'Liberation Sans',sans-serif;color:#101010;font-weight:bold">作成</div>
<div class="f" style="left:440.00px;top:145.25px;font-size:7.0px;transform:scaleX(1.179);font-family:'Liberation Sans',sans-serif;color:#101010;font-weight:bold">検体検査</div>
<div class="f" style="left:441.44px;top:156.00px;font-size:7.5px;transform:scaleX(0.939);font-family:'Liberation Sans',sans-serif;color:#101010;font-weight:bold">取り込み</div>
<div class="f" style="left:440.40px;top:226.70px;font-size:7.5px;transform:scaleX(1.027);font-family:'Liberation Sans',sans-serif;color:#0A1404;font-weight:bold">PDF出力</div>
<div class="f" style="left:501.50px;top:220.47px;font-size:8.5px;transform:scaleX(0.938);font-family:'Liberation Serif',serif;color:#3A3A3A">PDF出力結果</div>
<div class="f" style="left:32.00px;top:241.50px;font-size:7.5px;transform:scaleX(0.876);font-family:'Liberation Serif',serif;color:#1A1A1A;text-shadow:0.25px 0 0 rgba(0,0,0,0.3)">2013年5月頃より、上腹部痛・背部痛を認め7月17日に松阪中央総合病院を受診。造影CT、MRI／MRCPにて精査さ</div>
<div class="f" style="left:32.00px;top:251.50px;font-size:7.5px;transform:scaleX(0.856);font-family:'Liberation Serif',serif;color:#1A1A1A;text-shadow:0.25px 0 0 rgba(0,0,0,0.3)">れ、膵体部癌（φ30mm）が疑われた。EUS－FNA施行され、高分化腺癌と診断。画像所見では、SPAの浸潤・CHA、Ce</div>
<div class="f" style="left:32.00px;top:261.50px;font-size:7.5px;transform:scaleX(0.873);font-family:'Liberation Serif',serif;color:#1A1A1A;text-shadow:0.25px 0 0 rgba(0,0,0,0.3)">liac根部への近接(EUSでは浸潤なし)、1群LN転移疑い。今後の治療方針につき紹介受診。8／1日に放射線治療科受診</div>
<div class="f" style="left:31.15px;top:271.50px;font-size:7.5px;transform:scaleX(0.852);font-family:'Liberation Serif',serif;color:#1A1A1A;text-shadow:0.25px 0 0 rgba(0,0,0,0.3)">し、8月5日からRadiation開始予定。2013年5月頃より、上腹部痛・背部痛を認め7月17日に松阪中央総合病院を受診。造</div>
<div class="f" style="left:32.00px;top:281.50px;font-size:7.5px;transform:scaleX(0.870);font-family:'Liberation Serif',serif;color:#1A1A1A;text-shadow:0.25px 0 0 rgba(0,0,0,0.3)">影CT、MRI／MRCPにて精査され、膵体部癌（φ30mm）が疑われた。EUS－FNA施行され、高分化腺癌と診断。画像</div>
<div class="f" style="left:32.00px;top:291.50px;font-size:7.5px;transform:scaleX(0.870);font-family:'Liberation Serif',serif;color:#1A1A1A;text-shadow:0.25px 0 0 rgba(0,0,0,0.3)">所見では、SPAの浸潤・CHA、Celiac根部への近接(EUSでは浸潤なし)、1群LN転移疑い。今後の治療方針につき紹介</div>
<div class="f" style="left:32.00px;top:301.50px;font-size:7.5px;transform:scaleX(0.912);font-family:'Liberation Serif',serif;color:#1A1A1A;text-shadow:0.25px 0 0 rgba(0,0,0,0.3)">受診。8／1日に放射線治療科受診し、8月5日からRadiation開始予定。</div>
<div class="f" style="left:107.50px;top:321.50px;font-size:7.0px;transform:scaleX(0.986);font-family:'Liberation Serif',serif;color:#000;text-shadow:0.25px 0 0 rgba(0,0,0,0.3)">身長</div>
<div class="f" style="left:133.30px;top:320.75px;font-size:8px;transform:scaleX(0.779);font-family:'Liberation Sans',sans-serif;color:#101010">170</div>
<div class="f" style="left:155.80px;top:320.80px;font-size:8px;transform:scaleX(1.000);font-family:'Liberation Serif',serif;color:#000;text-shadow:0.25px 0 0 rgba(0,0,0,0.3)">cm</div>
<div class="f" style="left:180.00px;top:321.50px;font-size:7.0px;transform:scaleX(1.050);font-family:'Liberation Serif',serif;color:#000;text-shadow:0.25px 0 0 rgba(0,0,0,0.3)">体重</div>
<div class="f" style="left:201.00px;top:320.75px;font-size:8px;transform:scaleX(1.000);font-family:'Liberation Sans',sans-serif;color:#101010">62</div>
<div class="f" style="left:220.00px;top:320.75px;font-size:8px;transform:scaleX(1.000);font-family:'Liberation Serif',serif;color:#000;text-shadow:0.25px 0 0 rgba(0,0,0,0.3)">kg</div>
<div class="f" style="left:243.30px;top:321.50px;font-size:7.0px;transform:scaleX(1.014);font-family:'Liberation Serif',serif;color:#000;text-shadow:0.25px 0 0 rgba(0,0,0,0.3)">標準体重</div>
<div class="f" style="left:279.00px;top:320.75px;font-size:8px;transform:scaleX(0.906);font-family:'Liberation Sans',sans-serif;color:#101010">63.6</div>
<div class="f" style="left:300.70px;top:320.75px;font-size:8px;transform:scaleX(1.000);font-family:'Liberation Serif',serif;color:#000;text-shadow:0.25px 0 0 rgba(0,0,0,0.3)">kg</div>
<div class="f" style="left:32.00px;top:336.25px;font-size:7.0px;transform:scaleX(0.951);font-family:'Liberation Serif',serif;color:#000;text-shadow:0.25px 0 0 rgba(0,0,0,0.3)">貧血黄疸なし</div>
<div class="f" style="left:32.00px;top:345.65px;font-size:7.0px;transform:scaleX(0.948);font-family:'Liberation Serif',serif;color:#000;text-shadow:0.25px 0 0 rgba(0,0,0,0.3)">腹部平坦軟、圧痛なし、腫瘤触知せず、</div>
<div class="f" style="left:32.00px;top:355.65px;font-size:7.0px;transform:scaleX(0.964);font-family:'Liberation Serif',serif;color:#000;text-shadow:0.25px 0 0 rgba(0,0,0,0.3)">腸音正常</div>
<div class="f" style="left:49.79px;top:392.25px;font-size:8px;transform:scaleX(0.907);font-family:'Liberation Serif',serif;/*na*/color:#2A2A2A">1.血型</div>
<div class="f" style="left:116.25px;top:392.10px;font-size:8px;transform:scaleX(1.000);font-family:'Liberation Sans',sans-serif;font-weight:bold;color:#202020">A</div>
<div class="f" style="left:129.75px;top:391.65px;font-size:8px;transform:scaleX(0.756);font-family:'Liberation Serif',serif;color:#2A2A2A">型</div>
<div class="f" style="left:137.60px;top:392.00px;font-size:8px;transform:scaleX(1.000);font-family:'Liberation Serif',serif;color:#2A2A2A">(</div>
<div class="f" style="left:142.00px;top:392.00px;font-size:8px;transform:scaleX(1.000);font-family:'Liberation Serif',serif;color:#2A2A2A">+</div>
<div class="f" style="left:150.50px;top:392.00px;font-size:8px;transform:scaleX(1.000);font-family:'Liberation Serif',serif;color:#2A2A2A">)</div>
<div class="f" style="left:161.80px;top:392.20px;font-size:7.0px;transform:scaleX(0.970);font-family:'Liberation Serif',serif;color:#2A2A2A">不規則抗体</div>
<div class="f" style="left:196.70px;top:392.00px;font-size:8px;transform:scaleX(1.000);font-family:'Liberation Serif',serif;color:#2A2A2A">(</div>
<div class="f" style="left:197.80px;top:392.00px;font-size:8px;transform:scaleX(1.600);font-family:'Liberation Serif',serif;color:#2A2A2A">－</div>
<div class="f" style="left:210.40px;top:392.00px;font-size:8px;transform:scaleX(1.000);font-family:'Liberation Serif',serif;color:#2A2A2A">)</div>
<div class="f" style="left:50.70px;top:408.35px;font-size:8px;transform:scaleX(0.870);font-family:'Liberation Serif',serif;/*na*/color:#2A2A2A">2.感染症</div>
<div class="f" style="left:111.00px;top:407.90px;font-size:8px;transform:scaleX(0.844);font-family:'Liberation Serif',serif;color:#2A2A2A">HBsAg</div>
<div class="f" style="left:133.50px;top:407.50px;font-size:8px;transform:scaleX(1.000);font-family:'Liberation Serif',serif;color:#2A2A2A">(</div>
<div class="f" style="left:146.80px;top:407.75px;font-size:8px;transform:scaleX(1.000);font-family:'Liberation Serif',serif;color:#2A2A2A">),</div>
<div class="f" style="left:154.50px;top:408.00px;font-size:8px;transform:scaleX(0.962);font-family:'Liberation Serif',serif;color:#2A2A2A">HCV (</div>
<div class="f" style="left:187.00px;top:407.75px;font-size:8px;transform:scaleX(1.000);font-family:'Liberation Serif',serif;color:#2A2A2A">),</div>
<div class="f" style="left:196.80px;top:408.00px;font-size:8px;transform:scaleX(0.825);font-family:'Liberation Serif',serif;color:#2A2A2A">TPHA(</div>
<div class="f" style="left:227.00px;top:407.75px;font-size:8px;transform:scaleX(1.000);font-family:'Liberation Serif',serif;color:#2A2A2A">),</div>
<div class="f" style="left:235.70px;top:408.00px;font-size:8px;transform:scaleX(0.844);font-family:'Liberation Serif',serif;color:#2A2A2A">RPR(</div>
<div class="f" style="left:262.50px;top:407.75px;font-size:8px;transform:scaleX(1.000);font-family:'Liberation Serif',serif;color:#2A2A2A">),</div>
<div class="f" style="left:272.00px;top:408.00px;font-size:8px;transform:scaleX(0.847);font-family:'Liberation Serif',serif;color:#2A2A2A">HIV (</div>
<div class="f" style="left:299.90px;top:407.50px;font-size:8px;transform:scaleX(1.000);font-family:'Liberation Serif',serif;color:#2A2A2A">)</div>
<div class="f" style="left:50.10px;top:422.70px;font-size:8px;transform:scaleX(0.916);font-family:'Liberation Serif',serif;color:#2A2A2A">3.CBC(</div>
<div class="f" style="left:88.30px;top:419.25px;font-size:5px;transform:scaleX(1.000);font-family:'Liberation Serif',serif;color:#2A2A2A">/</div>
<div class="f" style="left:104.50px;top:421.75px;font-size:8px;transform:scaleX(1.000);font-family:'Liberation Serif',serif;color:#2A2A2A">)</div>
<div class="f" style="left:109.20px;top:422.75px;font-size:8px;transform:scaleX(0.900);font-family:'Liberation Serif',serif;color:#2A2A2A">: WBC</div>
<div class="f" style="left:159.80px;top:421.90px;font-size:8px;transform:scaleX(0.873);font-family:'Liberation Serif',serif;color:#2A2A2A">/mm</div>
<div class="f" style="left:176.80px;top:421.50px;font-size:8px;transform:scaleX(1.000);font-family:'Liberation Serif',serif;color:#2A2A2A">3</div>
<div class="f" style="left:193.90px;top:421.85px;font-size:8px;transform:scaleX(1.000);font-family:'Liberation Serif',serif;color:#2A2A2A">Hb</div>
<div class="f" style="left:228.20px;top:421.00px;font-size:8px;transform:scaleX(1.067);font-family:'Liberation Serif',serif;color:#2A2A2A">g/dl</div>
<div class="f" style="left:259.20px;top:421.85px;font-size:8px;transform:scaleX(0.917);font-family:'Liberation Serif',serif;color:#2A2A2A">Hct</div>
<div class="f" style="left:295.10px;top:421.85px;font-size:8px;transform:scaleX(1.000);font-family:'Liberation Serif',serif;font-weight:bold;color:#2A2A2A">%</div>
<div class="f" style="left:323.00px;top:421.75px;font-size:8px;transform:scaleX(0.889);font-family:'Liberation Serif',serif;color:#2A2A2A">Plt</div>
<div class="f" style="left:358.40px;top:420.50px;font-size:9px;transform:scaleX(0.854);font-family:'Liberation Serif',serif;color:#2A2A2A">×10⁴/mm³</div>
<div class="f" style="left:50.10px;top:436.75px;font-size:8px;transform:scaleX(0.916);font-family:'Liberation Serif',serif;/*na*/color:#2A2A2A">4.凝固(</div>
<div class="f" style="left:88.30px;top:434.45px;font-size:5px;transform:scaleX(1.000);font-family:'Liberation Serif',serif;color:#2A2A2A">/</div>
<div class="f" style="left:104.50px;top:436.75px;font-size:8px;transform:scaleX(1.000);font-family:'Liberation Serif',serif;color:#2A2A2A">)</div>
<div class="f" style="left:112.20px;top:436.70px;font-size:8px;transform:scaleX(0.865);font-family:'Liberation Serif',serif;color:#2A2A2A">APTT</div>
<div class="f" style="left:194.30px;top:436.90px;font-size:8px;transform:scaleX(1.000);font-family:'Liberation Serif',serif;color:#2A2A2A">PT</div>
<div class="f" style="left:257.80px;top:436.90px;font-size:8px;transform:scaleX(0.731);font-family:'Liberation Serif',serif;color:#2A2A2A">PT%</div>
<div class="f" style="left:309.00px;top:437.00px;font-size:8px;transform:scaleX(0.904);font-family:'Liberation Serif',serif;color:#2A2A2A">PT-INR</div>
<div class="f" style="left:104.50px;top:447.85px;font-size:8px;transform:scaleX(0.857);font-family:'Liberation Sans',sans-serif;color:#2A2A2A">D-Dimer</div>
<div class="f" style="left:56.00px;top:465.50px;font-size:8px;transform:scaleX(0.908);font-family:'Liberation Serif',serif;/*na*/color:#2A2A2A">5.生化(</div>
<script>(function(){var W=[[191, 0.9414], [36, 0.6108], [23, 0.7826], [23, 0.8261], [20, 0.9], [24, 0.7917], [37, 0.6111], [44, 0.6279], [29, 0.7], [45, 0.6304], [30, 0.7333], [4, 1.0], [28, 0.6288], [24, 0.9583], [62, 0.7581], [42, 0.7857], [42, 0.8049], [42, 0.8293], [14, 0.8214], [21, 0.9722], [37, 0.6583], [32, 0.8969], [65, 0.7385], [35, 0.5943], [6, 1.0], [56, 0.6636], [11, 0.7273], [11, 0.8182], [11, 0.8182], [11, 0.8182], [135, 0.963], [28, 0.9655], [32, 0.7188], [28, 0.9431], [32, 0.8594], [21, 1.0048], [21, 1.0095], [21, 0.9762], [21, 0.9318], [49, 1.0], [42, 1.0], [36, 0.9222], [54, 0.5321], [59, 0.781], [64, 0.9881], [14, 1.0179], [8, 1.0], [8, 1.0875], [14, 0.95], [7, 1.0], [28, 0.9037], [40, 0.9974], [42, 0.9561], [28, 0.9107], [12, 1.05], [3, 1.0], [14, 0.8933], [21, 0.9714], [59, 0.9712], [14, 1.0357], [14, 1.0], [21, 1.0095], [35, 0.9343], [25, 1.036], [21, 0.9524], [59, 1.0], [35, 1.1657], [16, 0.9706], [28, 1.1786], [32, 0.9394], [31, 1.0274], [52, 0.9385], [403, 0.8756], [418, 0.8565], [411, 0.8735], [419, 0.8517], [409, 0.8704], [409, 0.8704], [244, 0.9121], [14, 0.9857], [13, 0.7786], [10, 1.0], [14, 1.05], [9, 1.0], [8, 1.0], [28, 1.0143], [16, 0.9062], [8, 1.0], [42, 0.9512], [126, 0.9479], [28, 0.9643], [22, 0.9071], [6, 1.0], [8, 0.7563], [3, 1.0], [5, 1.0], [3, 1.0], [35, 0.97], [3, 1.0], [8, 1.6], [3, 1.0], [30, 0.87], [24, 0.8438], [3, 1.0], [5, 1.0], [21, 0.9619], [5, 1.0], [24, 0.825], [5, 1.0], [18, 0.8444], [5, 1.0], [19, 0.8474], [3, 1.0], [25, 0.916], [1, 1.0], [3, 1.0], [22, 0.9], [15, 0.8733], [4, 1.0], [10, 1.0], [12, 1.0667], [12, 0.9167], [8, 1.0], [9, 0.8889], [36, 0.8541], [25, 0.916], [1, 1.0], [3, 1.0], [20, 0.865], [9, 1.0], [16, 0.7312], [25, 0.904], [30, 0.8567], [25, 0.908]];var e=document.querySelectorAll(".f");for(var i=0;i<e.length&&i<W.length;i++){var w=e[i].offsetWidth;if(w>0&&Math.abs(w-W[i][0])>1){e[i].style.transform="scaleX("+(W[i][1]*W[i][0]/w)+")";}}})();</script>
</body></html>
